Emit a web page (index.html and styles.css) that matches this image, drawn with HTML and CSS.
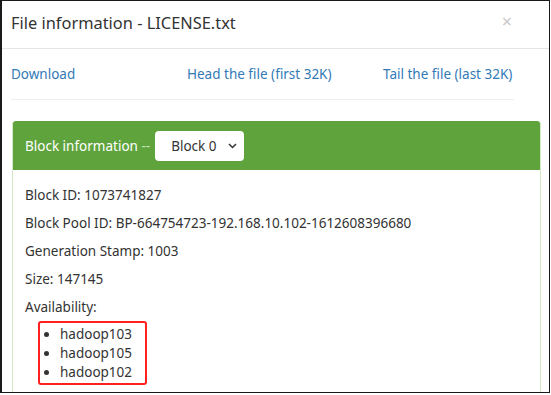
FILE: index.html
```html
<!DOCTYPE html>
<html lang="en">

<head>
    <meta charset="UTF-8">
    <title>File information</title>
    <link rel="stylesheet" href="styles.css">
</head>

<body>
    <div class="frame">
        <div class="modal-header">
            <h4 class="modal-title">File information - LICENSE.txt</h4>
            <span class="close">&times;</span>
        </div>
        <div class="modal-body">
            <div class="file-links">
                <a href="#" class="link-download">Download</a>
                <a href="#" class="link-head">Head the file (first 32K)</a>
                <a href="#" class="link-tail">Tail the file (last 32K)</a>
            </div>
            <div class="panel">
                <div class="panel-heading">
                    <span class="panel-title">Block information <span class="dashes">--</span></span>
                    <div class="block-select">
                        <span>Block 0</span>
                        <svg width="9" height="6" viewBox="0 0 9 6"><path d="M1 1l3.5 3.5 3.5-3.5" fill="none" stroke="#333" stroke-width="1.5"/></svg>
                    </div>
                </div>
                <div class="panel-body">
                    <p>Block ID: 1073741827</p>
                    <p>Block Pool ID: BP-664754723-192.168.10.102-1612608396680</p>
                    <p>Generation Stamp: 1003</p>
                    <p>Size: 147145</p>
                    <p class="avail">Availability:</p>
                    <ul class="hosts">
                        <li>hadoop103</li>
                        <li>hadoop105</li>
                        <li>hadoop102</li>
                    </ul>
                </div>
            </div>
        </div>
    </div>
</body>

</html>
```

FILE: styles.css
```css
body,
html {
    margin: 0;
    background: #ffffff;
}

body {
    font-family: "Noto Sans", "Open Sans", sans-serif;
    color: #333333;
    font-size: 13.5px;
}

.frame {
    width: 550px;
    height: 393px;
    box-sizing: border-box;
    border: 1px solid #1a1a1a;
    border-left-width: 2px;
    overflow: hidden;
}

/* header of the dialog */
.modal-header {
    height: 47px;
    border-bottom: 1px solid #e5e5e5;
    display: flex;
    align-items: center;
    justify-content: space-between;
    padding: 0 37px 4px 9px;
    box-sizing: border-box;
    height: 48px;
}

.modal-title {
    margin: 0;
    font-size: 16.4px;
    font-weight: normal;
    color: #333333;
}

.close {
    color: #c8c8c8;
    font-size: 18px;
    line-height: 1;
    margin-top: -4px;
}

.modal-body {
    padding: 0 8px 0 9px;
}

.file-links {
    display: flex;
    height: 50px;
    align-items: center;
    border-bottom: 1px solid #eeeeee;
    margin-right: 27px;
    white-space: nowrap;
}

.file-links a {
    color: #337ab7;
    text-decoration: none;
}

.link-download {
    width: 176px;
}

.link-head {
    width: 196px;
}

.panel {
    margin-top: 21px;
    margin-left: 1px;
    border: 1px solid #d6e9c6;
    border-top: none;
    border-radius: 3px;
    height: 300px;
}

.panel-heading {
    background: #5fa33d;
    height: 49px;
    display: flex;
    align-items: center;
    padding: 0 12px;
    color: #ffffff;
    border-radius: 3px 3px 0 0;
}

.dashes {
    color: #c9e3bb;
}

.block-select {
    margin-left: 5px;
    width: 89px;
    height: 30px;
    box-sizing: border-box;
    background: #ffffff;
    border-radius: 4px;
    color: #333333;
    display: flex;
    align-items: center;
    justify-content: space-between;
    padding: 0 7px 0 16px;
}

.panel-body {
    padding: 16px 12px;
}

.panel-body p {
    margin: 0 0 10px 0;
    line-height: 18px;
}

.panel-body .avail {
    margin-bottom: 5px;
}

.hosts {
    margin: 0 0 0 13px;
    padding: 2px 0 1px 20px;
    border: 2px solid #ff2020;
    border-radius: 3px;
    width: 85px;
    line-height: 19px;
}
```
